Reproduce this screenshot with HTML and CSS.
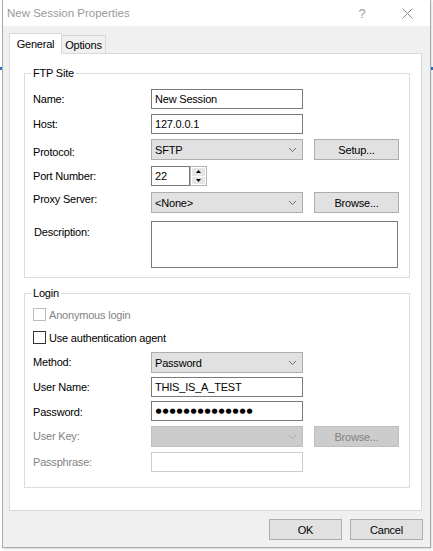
FILE: index.html
```html
<!DOCTYPE html>
<html lang="en">
<head>
<meta charset="utf-8">
<title>New Session Properties</title>
<link rel="stylesheet" href="styles.css">
</head>
<body>
<div class="window">
  <div class="titlebar">
    <span class="title">New Session Properties</span>
    <span class="help">?</span>
    <svg class="close" width="11" height="11" viewBox="0 0 11 11"><path d="M0.5 0.5 L10.5 10.5 M10.5 0.5 L0.5 10.5" stroke="#8a8a8a" stroke-width="1" fill="none"/></svg>
  </div>
  <div class="content">
    <div class="tabs">
      <div class="tab active">General</div>
      <div class="tab">Options</div>
    </div>
    <div class="panel">
      <fieldset class="group ftp">
        <legend>FTP Site</legend>
        <div class="row">
          <span class="lbl">Name:</span>
          <div class="tb">New Session</div>
        </div>
        <div class="row gap5">
          <span class="lbl">Host:</span>
          <div class="tb">127.0.0.1</div>
        </div>
        <div class="row gap5">
          <span class="lbl lower">Protocol:</span>
          <div class="cb"><span>SFTP</span><svg class="chev" width="7" height="4" viewBox="0 0 7 4"><polyline points="0,0 3.5,3.5 7,0" stroke="#6a6a6a" stroke-width="1" fill="none"/></svg></div>
          <button class="btn">Setup...</button>
        </div>
        <div class="row gap6">
          <span class="lbl">Port Number:</span>
          <div class="num">
            <div class="tb port">22</div>
            <div class="spin">
              <div class="half"><svg width="5" height="3" viewBox="0 0 5 3"><polygon points="2.5,0 5,3 0,3" fill="#000"/></svg></div>
              <div class="half"><svg width="5" height="3" viewBox="0 0 5 3"><polygon points="0,0 5,0 2.5,3" fill="#000"/></svg></div>
            </div>
          </div>
        </div>
        <div class="row gap6">
          <span class="lbl higher">Proxy Server:</span>
          <div class="cb"><span>&lt;None&gt;</span><svg class="chev" width="7" height="4" viewBox="0 0 7 4"><polyline points="0,0 3.5,3.5 7,0" stroke="#6a6a6a" stroke-width="1" fill="none"/></svg></div>
          <button class="btn">Browse...</button>
        </div>
        <div class="row gap8 top">
          <span class="lbl desc">Description:</span>
          <div class="ta"></div>
        </div>
      </fieldset>

      <fieldset class="group login">
        <legend>Login</legend>
        <div class="chk disabled">
          <span class="box"></span><span>Anonymous login</span>
        </div>
        <div class="chk gap10">
          <span class="box"></span><span>Use authentication agent</span>
        </div>
        <div class="row gap8">
          <span class="lbl">Method:</span>
          <div class="cb"><span>Password</span><svg class="chev" width="7" height="4" viewBox="0 0 7 4"><polyline points="0,0 3.5,3.5 7,0" stroke="#6a6a6a" stroke-width="1" fill="none"/></svg></div>
        </div>
        <div class="row gap4">
          <span class="lbl">User Name:</span>
          <div class="tb">THIS_IS_A_TEST</div>
        </div>
        <div class="row gap4">
          <span class="lbl lower1">Password:</span>
          <div class="tb dots"><span>●</span><span>●</span><span>●</span><span>●</span><span>●</span><span>●</span><span>●</span><span>●</span><span>●</span><span>●</span><span>●</span><span>●</span><span>●</span><span>●</span></div>
        </div>
        <div class="row gap5">
          <span class="lbl dis">User Key:</span>
          <div class="cb disabled"><span></span><svg class="chev" width="7" height="4" viewBox="0 0 7 4"><polyline points="0,0 3.5,3.5 7,0" stroke="#a8a8a8" stroke-width="1" fill="none"/></svg></div>
          <button class="btn disabled">Browse...</button>
        </div>
        <div class="row gap5">
          <span class="lbl dis">Passphrase:</span>
          <div class="tb disabled"></div>
        </div>
      </fieldset>
    </div>
    <div class="footer">
      <button class="btn dlg">OK</button>
      <button class="btn dlg">Cancel</button>
    </div>
  </div>
</div>
</body>
</html>
```

FILE: styles.css
```css
html, body {
  margin: 0;
  padding: 0;
}

body {
  width: 433px;
  height: 551px;
  overflow: hidden;
  background: linear-gradient(to bottom, #ffffff 0, #ffffff 67px, #2a78c6 67px, #2a78c6 70px, #ffffff 70px);
  font-family: "Liberation Sans", Arial, sans-serif;
  font-size: 11px;
  letter-spacing: -0.2px;
  color: #000;
}

.window {
  box-sizing: border-box;
  margin-left: 2px;
  width: 429px;
  height: 548px;
  border: 1px solid #aaaaaa;
  border-top: none;
  background: #f0f0f0;
  display: flex;
  flex-direction: column;
  box-shadow: 1px 1px 2px rgba(0, 0, 0, 0.15);
}

.titlebar {
  height: 26px;
  flex: none;
  background: #ffffff;
  display: flex;
  align-items: center;
  padding-left: 4px;
  color: #999999;
  font-size: 11.5px;
  letter-spacing: 0;
}

.title {
  flex: 1;
}

.help {
  width: 10px;
  text-align: center;
  margin-right: 35px;
  font-size: 13px;
  color: #999999;
}

.close {
  flex: none;
  margin-right: 17px;
}

.content {
  padding: 7px 0 0 6px;
  display: flex;
  flex-direction: column;
}

.tabs {
  display: flex;
  align-items: flex-end;
  height: 20px;
}

.tab {
  box-sizing: border-box;
  height: 18px;
  width: 44px;
  border: 1px solid #d9d9d9;
  border-bottom: none;
  border-left: none;
  background: #f0f0f0;
  display: flex;
  align-items: center;
  justify-content: center;
}

.tab.active {
  width: 53px;
  height: 21px;
  margin-bottom: -1px;
  border-left: 1px solid #d9d9d9;
  background: #ffffff;
  position: relative;
  z-index: 1;
}

.panel {
  box-sizing: border-box;
  width: 413px;
  height: 458px;
  border: 1px solid #d9d9d9;
  background: #ffffff;
  padding: 13px 0 0 14px;
  display: flex;
  flex-direction: column;
}

.group {
  box-sizing: border-box;
  width: 386px;
  margin: 0;
  min-width: 0;
  border: 1px solid #dcdcdc;
  padding: 9px 0 9px 8px;
}

.group.login {
  margin-top: 9px;
  padding-top: 8px;
  padding-bottom: 15px;
}

.group legend {
  padding: 0 2px;
  margin-left: -2px;
  line-height: 13px;
  font-size: 11px;
}

.row {
  display: flex;
  align-items: center;
}

.row.top {
  align-items: flex-start;
}

.gap4 { margin-top: 4px; }
.gap5 { margin-top: 5px; }
.gap6 { margin-top: 6px; }
.gap8 { margin-top: 8px; }
.gap10 { margin-top: 10px; }

.lbl {
  width: 118px;
  flex: none;
  line-height: 13px;
}

.lbl.lower { padding-top: 5px; }
.lbl.lower1 { padding-top: 3px; }
.lbl.higher { padding-bottom: 6px; }
.lbl.desc { padding-top: 5px; padding-left: 1px; width: 117px; }
.lbl.dis { color: #838383; }

.tb {
  box-sizing: border-box;
  width: 152px;
  height: 20px;
  border: 1px solid #7a7a7a;
  background: #ffffff;
  padding: 0 3px;
  display: flex;
  align-items: center;
  white-space: nowrap;
  overflow: hidden;
}

.tb.disabled {
  border-color: #cccccc;
}

.tb.dots {
  padding-left: 3px;
}

.tb.dots span {
  display: inline-block;
  width: 7px;
  text-align: center;
  font-family: "DejaVu Sans", sans-serif;
  font-size: 7px;
  letter-spacing: 0;
}

.cb {
  box-sizing: border-box;
  width: 152px;
  height: 21px;
  border: 1px solid #adadad;
  background: #e1e1e1;
  padding-left: 3px;
  display: flex;
  align-items: center;
  justify-content: space-between;
}

.cb.disabled {
  background: #cccccc;
  border-color: #bfbfbf;
}

.chev {
  flex: none;
  margin-right: 6px;
}

.btn {
  box-sizing: border-box;
  width: 85px;
  height: 21px;
  margin: 0 0 0 11px;
  padding: 0;
  border: 1px solid #adadad;
  background: #e1e1e1;
  font-family: inherit;
  font-size: 11px;
  letter-spacing: -0.2px;
  color: #000;
  text-align: center;
}

.btn.disabled {
  background: #cccccc;
  border-color: #bfbfbf;
  color: #838383;
}

.num {
  display: flex;
}

.tb.port {
  width: 39px;
}

.spin {
  box-sizing: border-box;
  width: 17px;
  height: 20px;
  border: 1px solid #b5b5b5;
  display: flex;
  flex-direction: column;
  background: #ffffff;
  padding: 1px;
  gap: 1px;
}

.spin .half {
  flex: 1;
  background: #e5e5e5;
  display: flex;
  align-items: center;
  justify-content: center;
}

.ta {
  box-sizing: border-box;
  width: 247px;
  height: 47px;
  border: 1px solid #7a7a7a;
  background: #ffffff;
}

.chk {
  display: flex;
  align-items: center;
  height: 13px;
}

.chk .box {
  box-sizing: border-box;
  width: 13px;
  height: 13px;
  border: 1px solid #333333;
  background: #ffffff;
  margin-right: 3px;
  flex: none;
}

.chk.disabled {
  color: #838383;
}

.chk.disabled .box {
  border-color: #bcbcbc;
}

.footer {
  display: flex;
  justify-content: flex-end;
  gap: 8px;
  margin-top: 8px;
  padding-right: 7px;
}

.btn.dlg {
  width: 73px;
  margin: 0;
}
```
